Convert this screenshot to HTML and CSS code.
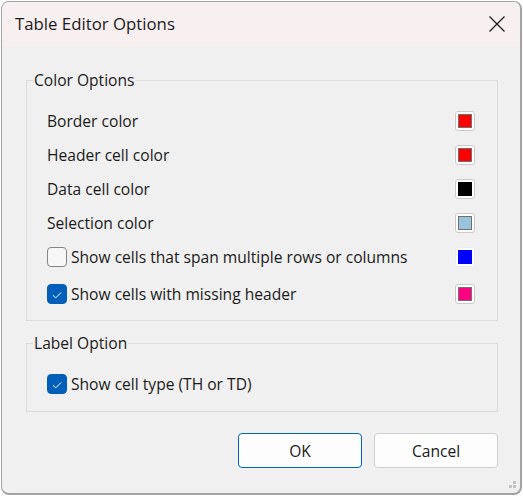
FILE: index.html
```html
<!DOCTYPE html>
<html lang="en">
<head>
<meta charset="utf-8">
<title>Table Editor Options</title>
<link rel="stylesheet" href="styles.css">
</head>
<body>
<div class="window">
  <div class="titlebar">
    <span class="title">Table Editor Options</span>
    <span class="close" aria-label="Close">
      <svg width="16" height="16" viewBox="0 0 16 16"><path d="M0.5 0.5 L15.5 15.5 M15.5 0.5 L0.5 15.5" stroke="#1a1a1a" stroke-width="1.2" fill="none"/></svg>
    </span>
  </div>
  <div class="content">
    <fieldset class="group group-color">
      <legend>Color Options</legend>
      <div class="row"><span class="label">Border color</span><span class="swatch"><span class="chip" style="background:#ff0000"></span></span></div>
      <div class="row"><span class="label">Header cell color</span><span class="swatch"><span class="chip" style="background:#ff0000"></span></span></div>
      <div class="row"><span class="label">Data cell color</span><span class="swatch"><span class="chip chip-plain" style="background:#000000"></span></span></div>
      <div class="row"><span class="label">Selection color</span><span class="swatch"><span class="chip" style="background:#9ac3dc"></span></span></div>
      <div class="row"><label class="check"><span class="box"></span><span>Show cells that span multiple rows or columns</span></label><span class="swatch swatch-light"><span class="chip chip-plain" style="background:#0000ff"></span></span></div>
      <div class="row row-last"><label class="check"><span class="box checked"><svg width="20" height="20" viewBox="0 0 20 20"><path d="M5.5 10.2 L8.6 13.2 L14.6 7.2" stroke="#fff" stroke-width="1.1" fill="none"/></svg></span><span>Show cells with missing header</span></label><span class="swatch"><span class="chip" style="background:#ff0080"></span></span></div>
    </fieldset>
    <fieldset class="group group-label">
      <legend>Label Option</legend>
      <div class="row"><label class="check"><span class="box checked"><svg width="20" height="20" viewBox="0 0 20 20"><path d="M5.5 10.2 L8.6 13.2 L14.6 7.2" stroke="#fff" stroke-width="1.1" fill="none"/></svg></span><span>Show cell type (TH or TD)</span></label></div>
    </fieldset>
    <div class="buttons">
      <button class="btn btn-default">OK</button>
      <button class="btn">Cancel</button>
    </div>
  </div>
  <span class="grip"><svg width="9" height="9" viewBox="0 0 9 9"><rect x="5" y="0" width="3" height="3" fill="#c4c4c4"/><rect x="1" y="4" width="3" height="3" fill="#c4c4c4"/><rect x="5" y="4" width="3" height="3" fill="#c4c4c4"/></svg></span>
</div>
</body>
</html>
```

FILE: styles.css
```css
html, body {
  margin: 0;
  padding: 0;
  background: #ffffff;
}
body {
  font-family: "Open Sans", "Noto Sans", sans-serif;
  font-size: 15.6px;
  color: #1a1a1a;
}
.window {
  position: relative;
  box-sizing: border-box;
  margin: 1px 0 0 1px;
  width: 521px;
  height: 494px;
  border: 1px solid #a3a3a3;
  border-right-width: 2px;
  border-bottom-width: 2px;
  border-radius: 8px;
  background: #f0f0f0;
  overflow: hidden;
}
.titlebar {
  height: 45px;
  background: #f8eff0;
  display: flex;
  align-items: center;
  justify-content: space-between;
  padding: 0 15px 0 13px;
}
.title {
  font-size: 16.8px;
  color: #1a1a1a;
  margin-top: -2px;
}
.close {
  display: flex;
  width: 16px;
  height: 16px;
  margin-top: -2px;
}
.content {
  padding: 23px 22px 0 24px;
}
.group {
  margin: 0;
  border: 1px solid #dcdcdc;
  border-radius: 0;
  padding: 0 22px 9px 20px;
  min-width: 0;
}
.group legend {
  padding: 0 1px;
  margin-left: -14px;
  font-size: 15.6px;
  line-height: 20px;
}
.group-color {
  padding-top: 14px;
}
.group-label {
  margin-top: 12px;
  padding-top: 14px;
  padding-bottom: 10px;
}
.row {
  height: 34px;
  display: flex;
  align-items: center;
  justify-content: space-between;
}
.row-last {
  margin-top: 3px;
}
.label {
  font-size: 15.6px;
}
.check {
  display: flex;
  align-items: center;
  gap: 4px;
  font-size: 15.6px;
}
.box {
  box-sizing: border-box;
  width: 20px;
  height: 20px;
  border: 1px solid #858585;
  border-radius: 4px;
  background: #f7f7f7;
  display: flex;
}
.box.checked {
  background: #005fb8;
  border-color: #005fb8;
}
.swatch {
  box-sizing: border-box;
  width: 20px;
  height: 20px;
  border: 1px solid #cbcbcb;
  border-radius: 3px;
  background: #ffffff;
  display: flex;
  align-items: center;
  justify-content: center;
}
.swatch-light {
  border-color: #ececec;
}
.chip {
  box-sizing: border-box;
  width: 14px;
  height: 14px;
  border: 1px solid #707070;
}
.chip-plain {
  border: none;
}
.buttons {
  display: flex;
  justify-content: flex-end;
  gap: 12px;
  margin-top: 21px;
  padding-right: 0;
}
.btn {
  box-sizing: border-box;
  width: 124px;
  height: 35px;
  border: 1px solid #d0d0d0;
  border-radius: 4px;
  background: #fdfdfd;
  font-family: "Open Sans", "Noto Sans", sans-serif;
  font-size: 15.6px;
  color: #1a1a1a;
  padding: 0;
}
.btn-default {
  border-color: #0067c0;
}
.grip {
  position: absolute;
  right: 3px;
  bottom: 3px;
  display: flex;
}
```
